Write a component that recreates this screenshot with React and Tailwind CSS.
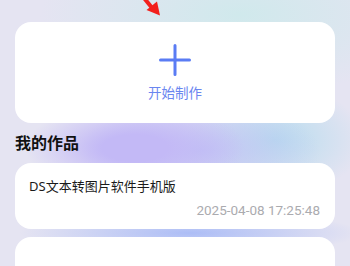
export default function App() {
  return (
    <div
      className="relative w-[350px] h-[266px] overflow-hidden px-[15px] pt-[22px] bg-[#e5e4f2] bg-[radial-gradient(ellipse_110px_45px_at_135px_148px,#c3b9f6_0%,#c3b9f6_30%,transparent_100%),radial-gradient(ellipse_120px_50px_at_200px_150px,#c0c3f4_0%,transparent_100%),radial-gradient(ellipse_90px_55px_at_275px_140px,#b6dcee_0%,transparent_100%),radial-gradient(ellipse_170px_22px_at_190px_233px,#acbdf6_0%,transparent_100%),radial-gradient(ellipse_200px_80px_at_240px_15px,#d0e9ec_0%,transparent_100%)]"
      style={{ fontFamily: '"Noto Sans", "Noto Sans CJK SC", sans-serif' }}
    >
      {/* red arrow annotation */}
      <svg
        className="absolute left-[140px] top-0"
        width="24"
        height="18"
        viewBox="0 0 24 18"
      >
        <line x1="4" y1="-2" x2="13" y2="9" stroke="#f2201c" strokeWidth="4" />
        <polygon points="20,15.5 6.5,10 17,1.5" fill="#f2201c" />
      </svg>

      {/* 开始制作 */}
      <div className="bg-white rounded-2xl h-[101px] flex flex-col items-center pt-[22px]">
        <svg width="32" height="32" viewBox="0 0 32 32">
          <path
            d="M16 1.5V30.5M1.5 16H30.5"
            stroke="#5a7cf4"
            strokeWidth="3"
            strokeLinecap="round"
          />
        </svg>
        <div className="mt-[7px] text-[13.5px] leading-5 text-[#6a86f0]">
          开始制作
        </div>
      </div>

      <div className="mt-2 h-6 leading-6 text-[16px] font-semibold text-[#111]">
        我的作品
      </div>

      <div className="mt-2 flex flex-col gap-2">
        <div className="bg-white rounded-2xl h-[66px] pt-[13px] px-[14px]">
          <div className="text-[13px] leading-5 text-[#1a1a1a]">
            DS文本转图片软件手机版
          </div>
          <div
            className="mt-[4px] text-right text-[13.5px] leading-5 text-[#ababaf] pr-px"
            style={{ fontFamily: "Roboto, sans-serif" }}
          >
            2025-04-08 17:25:48
          </div>
        </div>
        <div className="bg-white rounded-2xl h-[66px]" />
      </div>
    </div>
  );
}
